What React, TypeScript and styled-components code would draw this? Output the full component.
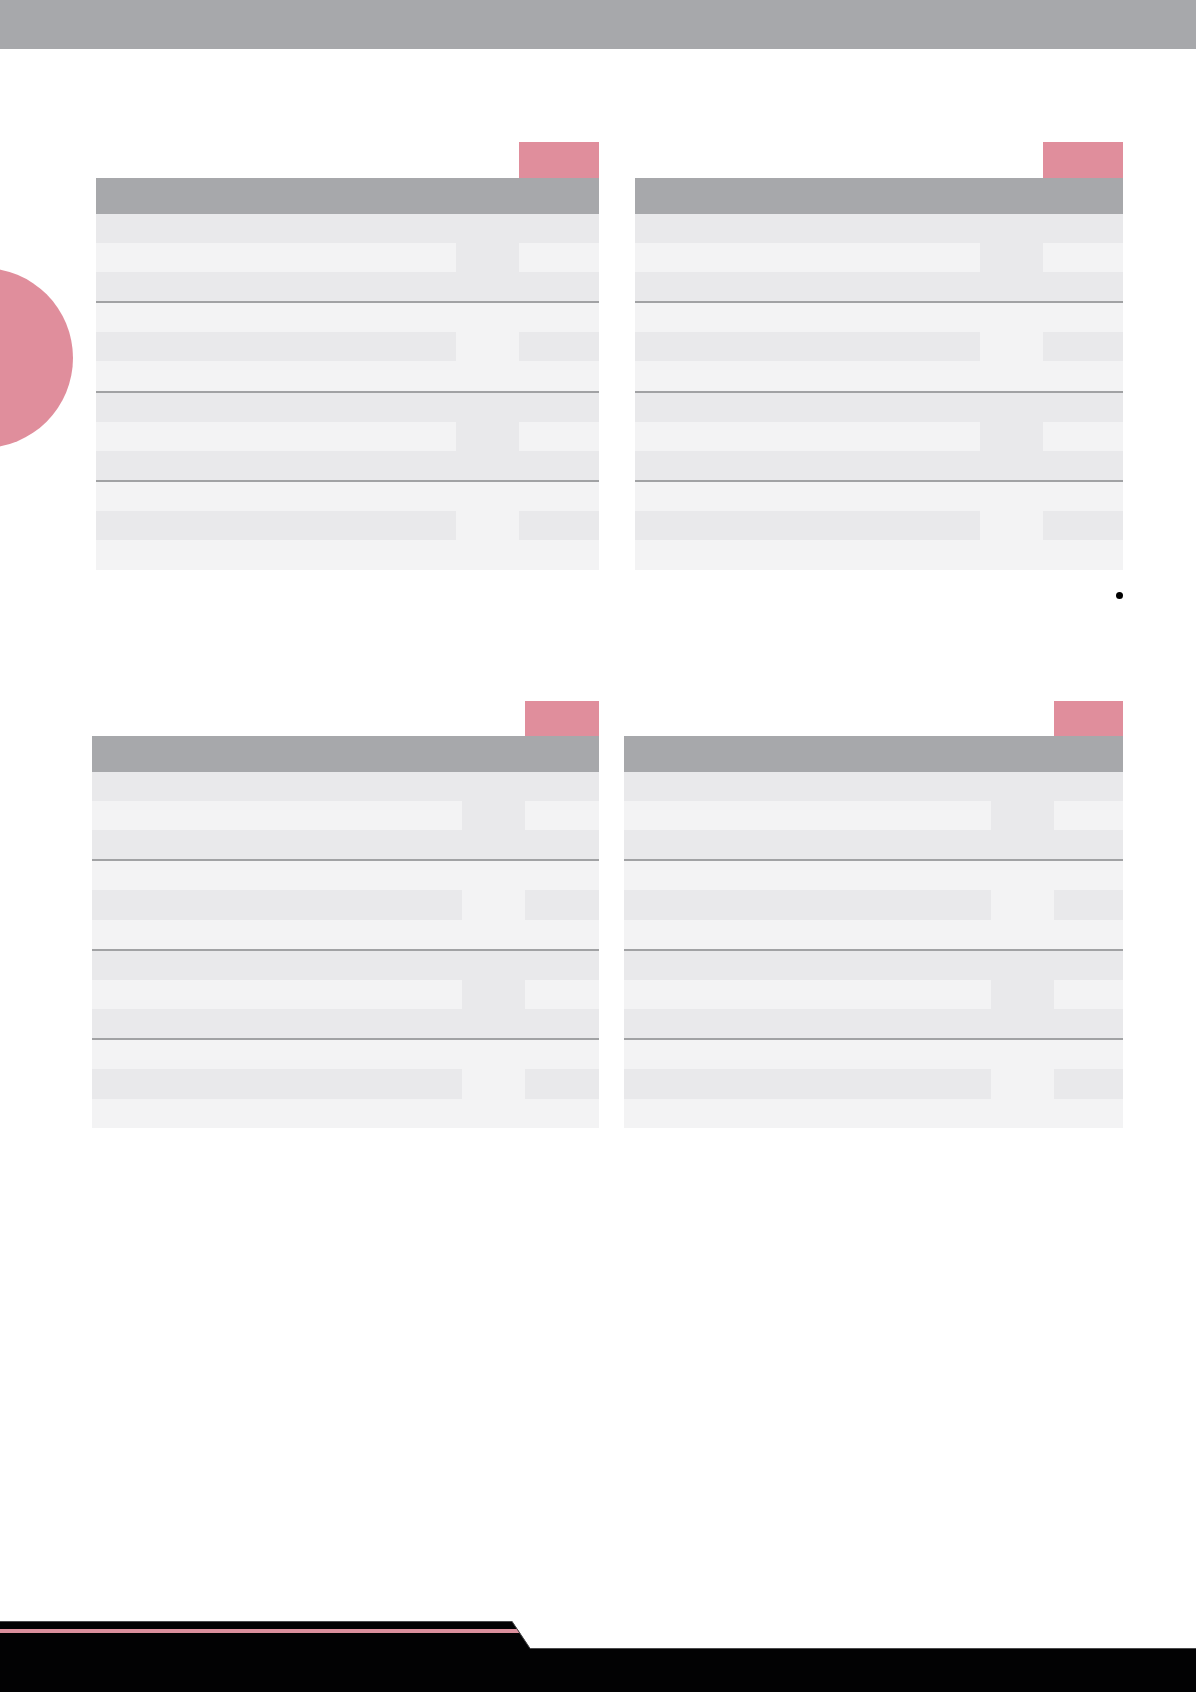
import React from "react";
import styled, { createGlobalStyle } from "styled-components";

const GlobalStyle = createGlobalStyle`
  html, body {
    margin: 0;
    padding: 0;
    background: #ffffff;
    font-family: "Liberation Sans", Arial, sans-serif;
  }
  body { overflow-x: hidden; }
  * { box-sizing: border-box; }
`;

const PINK = "#e08e9c";
const GREY = "#a7a8ab";
const DARK = "#e9e9eb";
const LIGHT = "#f3f3f4";
const RULE = "#a1a2a4";

const Page = styled.div`
  position: relative;
  min-height: 1692px;
  width: 1196px;
  display: flex;
  flex-direction: column;
  overflow: hidden;
`;

const TopBar = styled.header`
  height: 48.5px;
  background: ${GREY};
  flex-shrink: 0;
`;

const SideTab = styled.div`
  position: absolute;
  left: -107.5px;
  top: 268px;
  width: 180px;
  height: 180px;
  border-radius: 50%;
  background: ${PINK};
`;

const Section = styled.section<{ $top: number; $left: number; $gap: number }>`
  display: flex;
  align-items: flex-start;
  margin-top: ${(p) => p.$top}px;
  padding-left: ${(p) => p.$left}px;
  gap: ${(p) => p.$gap}px;
`;

const TableBox = styled.div<{ $w: number }>`
  width: ${(p) => p.$w}px;
  display: flex;
  flex-direction: column;
`;

const TabRow = styled.div`
  height: 35.6px;
  display: flex;
  justify-content: flex-end;
`;

const Tab = styled.div<{ $w: number }>`
  width: ${(p) => p.$w}px;
  height: 100%;
  background: ${PINK};
`;

const HeaderBar = styled.div`
  height: 35.6px;
  background: ${GREY};
`;

const Body = styled.div`
  height: 356px;
  display: flex;
  flex-direction: column;
`;

const Group = styled.div<{ $base: string; $cols: string }>`
  flex: 1;
  display: grid;
  grid-template-columns: ${(p) => p.$cols};
  grid-template-rows: 1fr 1fr 1fr;
  background: ${(p) => p.$base};
  border-bottom: 2px solid ${RULE};
  &:last-child {
    border-bottom: none;
  }
`;

const Stripe = styled.div<{ $color: string; $col: string }>`
  grid-row: 2;
  grid-column: ${(p) => p.$col};
  background: ${(p) => p.$color};
`;

const BulletRow = styled.div`
  height: 131px;
  padding-top: 22.9px;
  padding-left: 1115.5px;
`;

const Dot = styled.span`
  display: block;
  width: 7px;
  height: 7px;
  border-radius: 50%;
  background: #000;
`;

const Footer = styled.footer`
  margin-top: auto;
  height: 71px;
  display: block;
  line-height: 0;
`;

type TableSpec = { w: number; c3: number; c4: number };

function DataTable({ w, c3, c4 }: TableSpec) {
  const cols = `1fr 1fr ${c3}px ${c4}px`;
  const groups = [0, 1, 2, 3];
  return (
    <TableBox $w={w}>
      <TabRow>
        <Tab $w={c4} />
      </TabRow>
      <HeaderBar />
      <Body>
        {groups.map((g) => {
          const base = g % 2 === 0 ? DARK : LIGHT;
          const alt = g % 2 === 0 ? LIGHT : DARK;
          return (
            <Group key={g} $base={base} $cols={cols}>
              <Stripe $color={alt} $col="1 / 3" />
              <Stripe $color={alt} $col="4 / 5" />
            </Group>
          );
        })}
      </Body>
    </TableBox>
  );
}

function FooterShape() {
  return (
    <svg width="1196" height="71" viewBox="0 0 1196 71" xmlns="http://www.w3.org/2000/svg">
      <polygon points="0,0 512,0 530,27 1196,27 1196,71 0,71" fill="#020203" />
      <polygon points="0,8 517.3,8 520,12 0,12" fill="#db8f9c" />
      <polyline points="0,0.5 512,0.5 530,27.5 1196,27.5" fill="none" stroke="#4a4a4c" strokeWidth="1" />
    </svg>
  );
}

export default function App() {
  return (
    <>
      <GlobalStyle />
      <Page>
        <TopBar />
        <SideTab />
        <Section $top={93.9} $left={96} $gap={36}>
          <DataTable w={503} c3={63} c4={80} />
          <DataTable w={488} c3={63} c4={80} />
        </Section>
        <BulletRow>
          <Dot />
        </BulletRow>
        <Section $top={0} $left={92} $gap={25}>
          <DataTable w={507} c3={63} c4={74} />
          <DataTable w={499} c3={63} c4={69} />
        </Section>
        <Footer>
          <FooterShape />
        </Footer>
      </Page>
    </>
  );
}
